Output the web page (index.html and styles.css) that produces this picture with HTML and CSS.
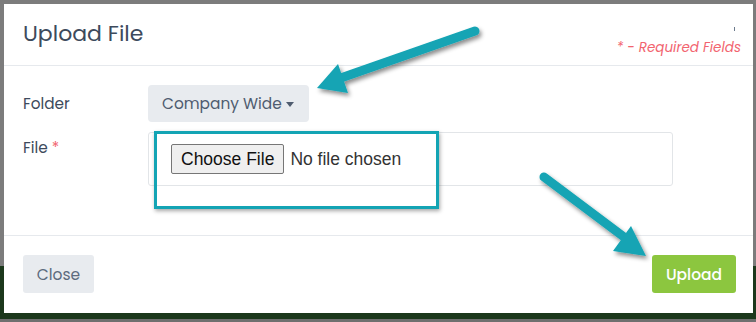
FILE: index.html
```html
<!DOCTYPE html>
<html lang="en">
<head>
  <meta charset="UTF-8" />
  <meta name="viewport" content="width=device-width, initial-scale=1.0" />
  <title>Upload File</title>
  <link rel="stylesheet" href="styles.css">
</head>
<body>
  <div class="modal">
    <div class="modal-header">
      <h1>Upload File</h1>
      <div class="header-side">
        <span class="close-mark"></span>
        <em class="required-note">* - Required Fields</em>
      </div>
    </div>

    <div class="modal-body">
      <div class="row">
        <label class="label">Folder</label>
        <button class="dropdown">Company Wide <span class="caret"></span></button>
      </div>
      <div class="row">
        <label class="label">File <span class="req">*</span></label>
        <div class="file-box">
          <input type="file" class="file-input">
        </div>
      </div>
    </div>

    <div class="modal-footer">
      <button class="btn btn-close">Close</button>
      <button class="btn btn-upload">Upload</button>
    </div>
  </div>

  <!-- screenshot annotations -->
  <div class="highlight"></div>
  <svg class="arrows" width="756" height="322" viewBox="0 0 756 322">
    <defs>
      <filter id="shadow" x="-20%" y="-20%" width="140%" height="140%">
        <feDropShadow dx="2" dy="3" stdDeviation="2" flood-color="#000" flood-opacity="0.45" />
      </filter>
    </defs>
    <g filter="url(#shadow)" fill="#13a4b4" stroke="#13a4b4">
      <line x1="475" y1="31" x2="335" y2="80" stroke-width="9" stroke-linecap="round" />
      <polygon points="317,88 338,64 348,93" stroke="none" />
      <line x1="544" y1="177" x2="628" y2="240" stroke-width="9" stroke-linecap="round" />
      <polygon points="646,256 631,226 613,251" stroke="none" />
    </g>
  </svg>
</body>
</html>
```

FILE: styles.css
```css
:root {
  --text: #3d4a5c;
  --muted: #5d6b7e;
  --border: #e6e9ed;
  --soft-bg: #e8ebef;
  --red: #f2646f;
  --green: #8cc63f;
  --teal: #13a4b4;
}

* {
  box-sizing: border-box;
}

body {
  margin: 0;
  width: 756px;
  height: 322px;
  overflow: hidden;
  position: relative;
  padding: 4px 3px 0 4px;
  font-family: 'Poppins', 'Open Sans', sans-serif;
  color: var(--text);
  background: linear-gradient(to bottom, #7c7c7c 0 266px, #1c381c 266px 319px, #6f6f6f 319px);
}

.modal {
  width: 749px;
  height: 309px;
  background: #fff;
  display: flex;
  flex-direction: column;
}

.modal-header {
  height: 62px;
  border-bottom: 1px solid var(--border);
  display: flex;
  justify-content: space-between;
  padding: 0 12px 0 19px;
}

.modal-header h1 {
  margin: 0;
  font-size: 22px;
  font-weight: 400;
  line-height: 60px;
}

.header-side {
  display: flex;
  flex-direction: column;
  align-items: flex-end;
  padding-top: 23px;
}

.close-mark {
  width: 1px;
  height: 4px;
  background: #6b7a8c;
  margin-right: 6px;
}

.required-note {
  margin-top: 7px;
  font-size: 13.5px;
  color: var(--red);
}

.modal-body {
  height: 170px;
  border-bottom: 1px solid var(--border);
  padding: 19px 19px 0;
  display: flex;
  flex-direction: column;
  gap: 10px;
}

.row {
  display: flex;
  align-items: flex-start;
}

.label {
  width: 125px;
  font-size: 15.3px;
  color: var(--text);
}

.row:first-child .label {
  line-height: 37px;
}

.row:last-child .label {
  line-height: 32px;
}

.req {
  color: var(--red);
}

.dropdown {
  height: 37px;
  width: 161px;
  border: none;
  border-radius: 4px;
  background: var(--soft-bg);
  color: #4f5c6f;
  font-family: inherit;
  font-size: 15.4px;
  padding: 0 0 0 14px;
  text-align: left;
}

.caret {
  display: inline-block;
  width: 0;
  height: 0;
  border-left: 4.5px solid transparent;
  border-right: 4.5px solid transparent;
  border-top: 5px solid #4f5c6f;
  vertical-align: middle;
  margin-left: 0;
}

.file-box {
  width: 525px;
  height: 54px;
  border: 1px solid #e2e5e8;
  border-radius: 3px;
  padding: 11px 0 0 22px;
}

.file-input {
  font-family: 'Liberation Sans', Arial, sans-serif;
  font-size: 17.5px;
  color: #333;
}

.file-input::file-selector-button {
  font-family: inherit;
  font-size: 17.5px;
  height: 30px;
  padding: 0 9px;
  margin-right: 6px;
  background: #efefef;
  border: 1px solid #767676;
  border-radius: 2px;
  color: #111;
}

.modal-footer {
  flex: 1;
  display: flex;
  justify-content: space-between;
  align-items: flex-start;
  padding: 19px 17px 0 19px;
}

.btn {
  height: 38px;
  border: none;
  border-radius: 3px;
  font-family: inherit;
  font-size: 15.5px;
}

.btn-close {
  width: 71px;
  background: var(--soft-bg);
  color: var(--muted);
}

.btn-upload {
  width: 84px;
  background: var(--green);
  color: #fff;
  font-weight: 500;
}

.highlight {
  position: absolute;
  left: 154px;
  top: 131px;
  width: 285px;
  height: 78px;
  border: 3px solid var(--teal);
  box-shadow: 1px 2px 4px rgba(0, 0, 0, 0.35);
}

.arrows {
  position: absolute;
  left: 0;
  top: 0;
}
```
